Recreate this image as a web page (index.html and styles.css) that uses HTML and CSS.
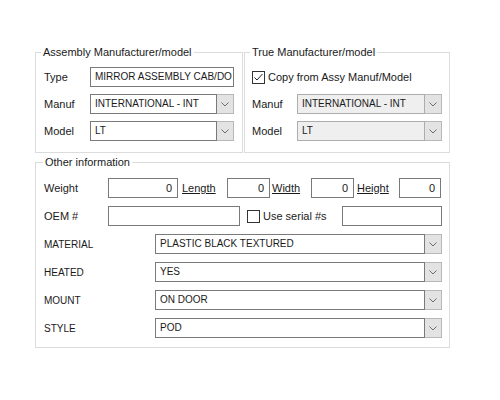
FILE: index.html
```html
<!DOCTYPE html>
<html lang="en">
<head>
    <meta charset="UTF-8">
    <title>Mirror details</title>
    <link rel="stylesheet" href="styles.css">
</head>
<body>
    <div class="form">
        <div class="top-groups">
            <fieldset class="group group-assy">
                <legend>Assembly Manufacturer/model</legend>
                <div class="row">
                    <span class="label">Type</span>
                    <div class="textbox">MIRROR ASSEMBLY CAB/DO</div>
                </div>
                <div class="row">
                    <span class="label">Manuf</span>
                    <div class="combo">
                        <div class="combo-text">INTERNATIONAL - INT</div>
                        <div class="combo-btn"><svg width="8" height="5" viewBox="0 0 8 5"><path d="M0.5 0.5 L4 4 L7.5 0.5" fill="none" stroke="#6d6d6d"/></svg></div>
                    </div>
                </div>
                <div class="row">
                    <span class="label">Model</span>
                    <div class="combo">
                        <div class="combo-text">LT</div>
                        <div class="combo-btn"><svg width="8" height="5" viewBox="0 0 8 5"><path d="M0.5 0.5 L4 4 L7.5 0.5" fill="none" stroke="#6d6d6d"/></svg></div>
                    </div>
                </div>
            </fieldset>
            <fieldset class="group group-true">
                <legend>True Manufacturer/model</legend>
                <div class="row">
                    <span class="checkbox checked"><svg width="11" height="11" viewBox="0 0 11 11"><path d="M1.5 5.5 L4 8 L9.5 2" fill="none" stroke="#222" stroke-width="1"/></svg></span>
                    <span class="check-text">Copy from Assy Manuf/Model</span>
                </div>
                <div class="row">
                    <span class="label">Manuf</span>
                    <div class="combo disabled">
                        <div class="combo-text">INTERNATIONAL - INT</div>
                        <div class="combo-btn"><svg width="8" height="5" viewBox="0 0 8 5"><path d="M0.5 0.5 L4 4 L7.5 0.5" fill="none" stroke="#6d6d6d"/></svg></div>
                    </div>
                </div>
                <div class="row">
                    <span class="label">Model</span>
                    <div class="combo disabled">
                        <div class="combo-text">LT</div>
                        <div class="combo-btn"><svg width="8" height="5" viewBox="0 0 8 5"><path d="M0.5 0.5 L4 4 L7.5 0.5" fill="none" stroke="#6d6d6d"/></svg></div>
                    </div>
                </div>
            </fieldset>
        </div>

        <fieldset class="group group-other">
            <legend>Other information</legend>
            <div class="dims">
                <span class="label">Weight</span>
                <div class="textbox num">0</div>
                <span class="link-label pad4">Length</span>
                <div class="textbox num">0</div>
                <span class="link-label pad2">Width</span>
                <div class="textbox num">0</div>
                <span class="link-label pad3">Height</span>
                <div class="textbox num">0</div>
            </div>
            <div class="row">
                <span class="label label-oem">OEM #</span>
                <div class="textbox oem"></div>
                <span class="checkbox serial-box"></span>
                <span class="check-text">Use serial #s</span>
                <div class="textbox serial"></div>
            </div>
            <div class="row">
                <span class="label label-attr">MATERIAL</span>
                <div class="combo">
                    <div class="combo-text">PLASTIC BLACK TEXTURED</div>
                    <div class="combo-btn"><svg width="8" height="5" viewBox="0 0 8 5"><path d="M0.5 0.5 L4 4 L7.5 0.5" fill="none" stroke="#6d6d6d"/></svg></div>
                </div>
            </div>
            <div class="row">
                <span class="label label-attr">HEATED</span>
                <div class="combo">
                    <div class="combo-text">YES</div>
                    <div class="combo-btn"><svg width="8" height="5" viewBox="0 0 8 5"><path d="M0.5 0.5 L4 4 L7.5 0.5" fill="none" stroke="#6d6d6d"/></svg></div>
                </div>
            </div>
            <div class="row">
                <span class="label label-attr">MOUNT</span>
                <div class="combo">
                    <div class="combo-text">ON DOOR</div>
                    <div class="combo-btn"><svg width="8" height="5" viewBox="0 0 8 5"><path d="M0.5 0.5 L4 4 L7.5 0.5" fill="none" stroke="#6d6d6d"/></svg></div>
                </div>
            </div>
            <div class="row">
                <span class="label label-attr">STYLE</span>
                <div class="combo">
                    <div class="combo-text">POD</div>
                    <div class="combo-btn"><svg width="8" height="5" viewBox="0 0 8 5"><path d="M0.5 0.5 L4 4 L7.5 0.5" fill="none" stroke="#6d6d6d"/></svg></div>
                </div>
            </div>
        </fieldset>
    </div>
</body>
</html>
```

FILE: styles.css
```css
body {
    margin: 0;
    padding: 0;
    background-color: #fff;
    color: #1a1a1a;
    font-family: "Liberation Sans", Arial, sans-serif;
    font-size: 11px;
}
.form {
    width: 415px;
    margin-left: 35px;
    padding-top: 46px;
}
.top-groups {
    display: flex;
    gap: 1px;
}
.group {
    margin: 0;
    min-width: 0;
    border: 1px solid #dcdcdc;
    padding: 8px 8px 11px 8px;
    display: flex;
    flex-direction: column;
    gap: 7px;
}
.group legend {
    margin-left: -3px;
    padding: 0 2px;
    line-height: 13px;
}
.group-assy {
    width: 208px;
    box-sizing: border-box;
}
.group-true {
    width: 206px;
    box-sizing: border-box;
    padding-left: 7px;
    padding-right: 7px;
}
.group-true legend {
    margin-left: -2px;
}
.group-other {
    margin-top: 3px;
    padding: 9px 7px 9px 8px;
    gap: 8px;
}
.group-other legend {
    margin-left: -1px;
}
.row {
    display: flex;
    align-items: center;
    height: 20px;
}
.label {
    width: 46px;
    flex-shrink: 0;
}
.group-true .label {
    width: 45px;
}
.textbox {
    flex: 1;
    height: 20px;
    box-sizing: border-box;
    border: 1px solid #7a7a7a;
    padding: 0 4px;
    font-size: 10px;
    line-height: 18px;
    white-space: nowrap;
    overflow: hidden;
}
.combo {
    flex: 1;
    display: flex;
    height: 20px;
}
.combo-text {
    flex: 1;
    box-sizing: border-box;
    border: 1px solid #7a7a7a;
    padding: 0 4px;
    font-size: 10px;
    line-height: 18px;
    white-space: nowrap;
    overflow: hidden;
}
.combo-btn {
    width: 17px;
    box-sizing: border-box;
    border: 1px solid #b8b8b8;
    border-left: none;
    background-color: #e3e3e3;
    display: flex;
    align-items: center;
    justify-content: center;
}
.combo.disabled .combo-text {
    background-color: #efefef;
    border-color: #adadad;
}
.checkbox {
    width: 13px;
    height: 13px;
    box-sizing: border-box;
    border: 1px solid #333;
    background-color: #fff;
    display: flex;
    align-items: center;
    justify-content: center;
    flex-shrink: 0;
}
.check-text {
    margin-left: 3px;
}
.dims {
    display: grid;
    grid-template-columns: 64px 70px 49px 43px 41px 43px 45px 42px;
    align-items: center;
    height: 20px;
}
.dims .label {
    width: auto;
}
.textbox.num {
    text-align: right;
    padding-right: 5px;
    font-size: 11px;
}
.link-label {
    text-decoration: underline;
}
.pad4 {
    padding-left: 4px;
}
.pad2 {
    padding-left: 2px;
}
.pad3 {
    padding-left: 3px;
}
.label-oem {
    width: 64px;
}
.textbox.oem {
    flex: 0 0 132px;
}
.serial-box {
    margin-left: 7px;
}
.textbox.serial {
    flex: 0 0 100px;
    margin-left: auto;
}
.label-attr {
    width: 111px;
    font-size: 10px;
}
```
